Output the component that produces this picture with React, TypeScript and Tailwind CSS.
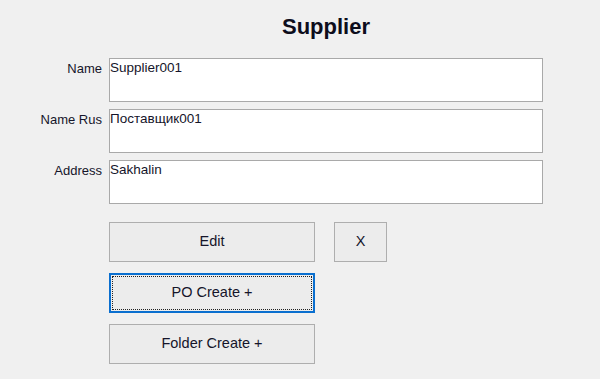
import React from "react";

const font = { fontFamily: '"Liberation Sans", Arial, sans-serif' };

function Field({ label, value }: { label: string; value: string }) {
  return (
    <div className="flex">
      <div className="w-[109px] pr-[7px] pt-[3px] text-right text-[13px] leading-[16px] text-[#15152a]">
        {label}
      </div>
      <div className="w-[434px] h-[44px] bg-white border border-[#a9a9a9] pt-[1px] pl-0 text-[13.5px] leading-[16px] text-[#15152a]">
        {value}
      </div>
    </div>
  );
}

function Btn({ label, w, focused }: { label: string; w: string; focused?: boolean }) {
  if (focused) {
    return (
      <div className={`${w} h-[40px] bg-[#ececec] border-2 border-[#0a6fcf] p-[1px]`}>
        <div className="w-full h-full border border-dotted border-[#222] flex items-center justify-center text-[14.5px] text-[#15152a]">
          {label}
        </div>
      </div>
    );
  }
  return (
    <div className={`${w} h-[40px] bg-[#ececec] border border-[#aeaeae] flex items-center justify-center text-[14.5px] text-[#15152a]`}>
      {label}
    </div>
  );
}

export default function App() {
  return (
    <div className="w-[600px] h-[379px] bg-[#f0f0f0] overflow-hidden" style={font}>
      <div className="pt-[14px] ml-[109px] w-[434px] h-[40px] text-center text-[22px] leading-[26px] font-bold text-[#0d0d1c]">
        Supplier
      </div>
      <div className="mt-[18px] flex flex-col gap-[7px]">
        <Field label="Name" value="Supplier001" />
        <Field label="Name Rus" value="Поставщик001" />
        <Field label="Address" value="Sakhalin" />
      </div>
      <div className="ml-[109px] mt-[18px] flex flex-col gap-[11px]">
        <div className="flex gap-[19px]">
          <Btn label="Edit" w="w-[206px]" />
          <Btn label="X" w="w-[53px]" />
        </div>
        <Btn label="PO Create +" w="w-[206px]" focused />
        <Btn label="Folder Create +" w="w-[206px]" />
      </div>
    </div>
  );
}
